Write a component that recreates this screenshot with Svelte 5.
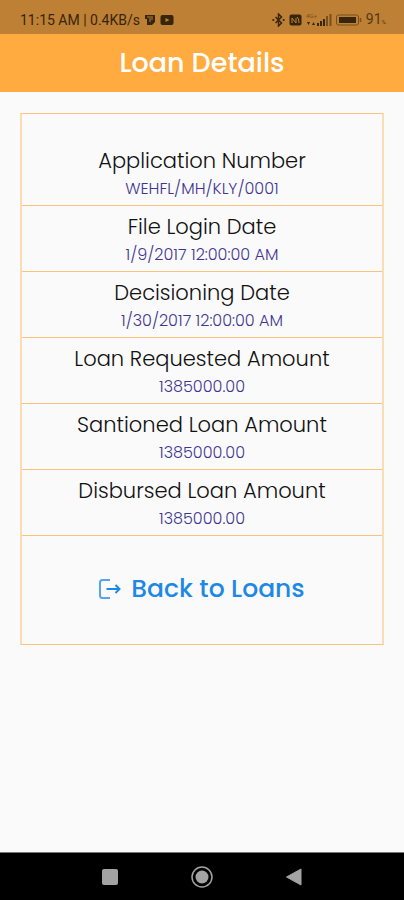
<script lang="ts">
  interface LoanField {
    label: string;
    value: string;
  }

  const fields: LoanField[] = [
    { label: "Application Number", value: "WEHFL/MH/KLY/0001" },
    { label: "File Login Date", value: "1/9/2017 12:00:00 AM" },
    { label: "Decisioning Date", value: "1/30/2017 12:00:00 AM" },
    { label: "Loan Requested Amount", value: "1385000.00" },
    { label: "Santioned Loan Amount", value: "1385000.00" },
    { label: "Disbursed Loan Amount", value: "1385000.00" },
  ];
</script>

<div class="screen">
  <div class="status-bar">
    <div class="status-group">
      <span>11:15 AM | 0.4KB/s</span>
      <svg width="12" height="12" viewBox="0 0 12 12" aria-hidden="true">
        <path d="M1 1h10v7l-3 3H3V5H1z" fill="#38250e" />
        <path d="M3 3h6M5 5h4M5 7h2" stroke="#bd8034" stroke-width="1" />
      </svg>
      <svg width="14" height="12" viewBox="0 0 14 12" aria-hidden="true">
        <rect x="0.5" y="1" width="13" height="10" rx="2" fill="#38250e" />
        <path d="M5.5 4v4l4-2z" fill="#bd8034" />
      </svg>
    </div>

    <div class="status-group right">
      <svg width="13" height="14" viewBox="0 0 13 14" aria-hidden="true">
        <path d="M3.5 4l6 6-3 3V1l3 3-6 6" fill="none" stroke="#38250e" stroke-width="1.5" />
        <circle cx="1.3" cy="7" r="1.1" fill="#38250e" />
        <circle cx="11.7" cy="7" r="1.1" fill="#38250e" />
      </svg>
      <svg width="13" height="12" viewBox="0 0 13 12" aria-hidden="true">
        <rect x="0.5" y="0.5" width="12" height="11" rx="2" fill="#38250e" />
        <path d="M3 9V4l4 5V4M8 3q2 1 2 6" fill="none" stroke="#bd8034" stroke-width="1" />
      </svg>
      <svg class="signal" width="26" height="14" viewBox="0 0 26 14" aria-hidden="true">
        <text x="0" y="5">4G+</text>
        <path d="M1 9h3l-1.5 3zM6 12l1.5-3 1.5 3z" fill="#38250e" />
        <path d="M12 10v3M15 8v5M18 6v7" stroke="#38250e" stroke-width="2" />
        <path d="M21 3v10M24.5 1v12" stroke="#74501f" stroke-width="2" />
      </svg>
      <svg width="26" height="12" viewBox="0 0 26 12" aria-hidden="true">
        <rect x="0.5" y="1" width="22" height="10" rx="2" fill="none" stroke="#74501f" />
        <rect x="3" y="3" width="17" height="6" fill="#38250e" />
        <path d="M24.5 4v4" stroke="#74501f" stroke-width="1.5" />
      </svg>
      <span class="battery">91<small>%</small></span>
    </div>
  </div>

  <header>
    <h1>Loan Details</h1>
  </header>

  <main>
    <div class="card">
      <dl>
        {#each fields as field}
          <div class="field">
            <dt>{field.label}</dt>
            <dd>{field.value}</dd>
          </div>
        {/each}
      </dl>
      <div class="card-footer">
        <button class="back">
          <svg width="22" height="20" viewBox="0 0 22 20" aria-hidden="true">
            <path d="M11 1H3.5Q1 1 1 3.5v13Q1 19 3.5 19H11" opacity="0.75" />
            <path d="M7.5 10H20.5M16.5 6l4 4-4 4" />
          </svg>
          Back to Loans
        </button>
      </div>
    </div>
  </main>

  <nav>
    <button aria-label="Recent apps">
      <svg width="24" height="24" viewBox="0 0 24 24">
        <rect x="4" y="4" width="16" height="16" rx="2" fill="#a3a3a3" />
      </svg>
    </button>
    <button aria-label="Home">
      <svg width="24" height="24" viewBox="0 0 24 24">
        <circle cx="12" cy="12" r="10" fill="none" stroke="#a3a3a3" stroke-width="1.5" />
        <circle cx="12" cy="12" r="6.5" fill="#a3a3a3" />
      </svg>
    </button>
    <button aria-label="Back">
      <svg width="24" height="24" viewBox="0 0 24 24">
        <path d="M4.5 12L19 4v16z" fill="#a3a3a3" stroke="#a3a3a3" stroke-linejoin="round" />
      </svg>
    </button>
  </nav>
</div>

<style>
  :global(body) {
    margin: 0;
    background: #fafafa;
  }

  .screen {
    display: flex;
    flex-direction: column;
    min-height: 100vh;
    background: #fafafa;
    font-family: Poppins, Inter, sans-serif;
  }

  .status-bar {
    display: flex;
    align-items: center;
    justify-content: space-between;
    box-sizing: border-box;
    height: 34px;
    padding: 6px 18px 0 20px;
    background: #bd8034;
    color: #38250e;
    font: 14px/20px Roboto, sans-serif;
  }

  .status-group {
    display: flex;
    align-items: center;
    gap: 4px;
    white-space: nowrap;
  }

  .signal text {
    font-size: 6px;
    fill: #74501f;
  }

  .battery {
    color: #553812;
  }

  .battery small {
    font-size: 6px;
  }

  header {
    display: flex;
    align-items: center;
    justify-content: center;
    height: 58px;
    background: #ffab40;
  }

  h1 {
    margin: 0;
    color: #fff;
    font-size: 27px;
    font-weight: 500;
    line-height: 40px;
  }

  main {
    flex: 1;
    padding: 21px 20px;
  }

  .card {
    border: 2px solid #fbdcb6;
    border-top: 1px solid #f9c27e;
    border-bottom: 1px solid #f9c27e;
    text-align: center;
  }

  dl {
    margin: 0;
    padding-top: 26px;
  }

  .field {
    padding: 7px 0 2px;
    border-bottom: 1px solid #fcc27c;
  }

  dt {
    color: #111;
    font-size: 21px;
    font-weight: 300;
    line-height: 28px;
  }

  dd {
    margin: 0;
    color: #3f3694;
    font-size: 16px;
    font-weight: 300;
    line-height: 28px;
  }

  .card-footer {
    display: flex;
    justify-content: center;
    padding: 33px 0 35px;
  }

  button {
    padding: 0;
    border: 0;
    background: none;
    cursor: pointer;
  }

  .back {
    display: flex;
    align-items: center;
    gap: 10px;
    color: #1e88e5;
    font-family: inherit;
    font-size: 25px;
    font-weight: 500;
    line-height: 40px;
  }

  .back svg {
    fill: none;
    stroke: #1e88e5;
    stroke-width: 2;
  }

  nav {
    display: flex;
    align-items: center;
    justify-content: center;
    gap: 68px;
    height: 47px;
    border-top: 1px solid #777;
    background: #000;
  }

  nav button {
    display: flex;
  }
</style>
